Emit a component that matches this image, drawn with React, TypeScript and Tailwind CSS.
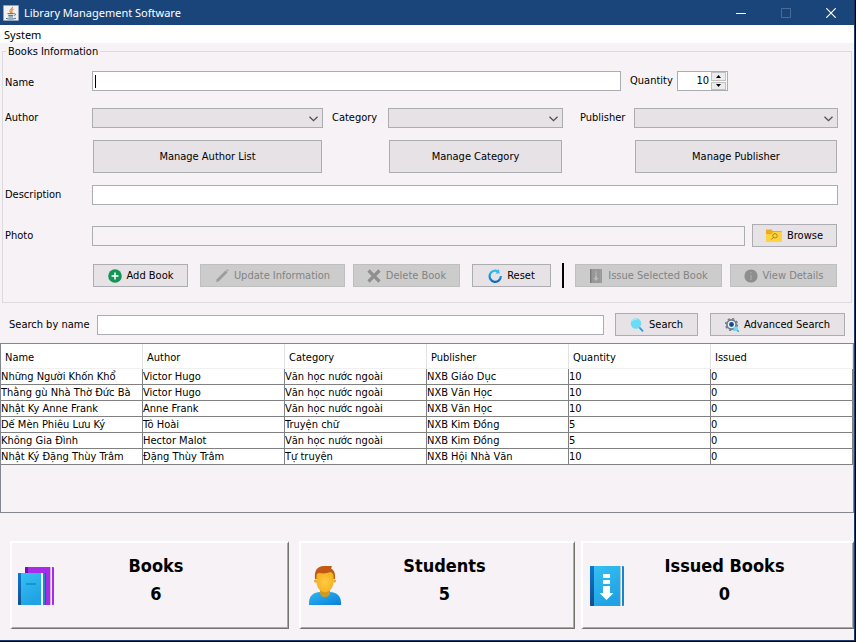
import React from "react";

type IconProps = { className?: string };

const JavaIcon = () => (
  <svg viewBox="0 0 16 16" className="h-4 w-4 shrink-0" aria-hidden="true">
    <rect width="16" height="16" rx="1" fill="#8fa6bd" />
    <rect x="1" y="1" width="14" height="14" fill="#f1f1f1" />
    <path d="M9.5 1.8c.6 1.9-3.2 2.600-2.600 4.300.2.7.9 1 .8 1.900M10.400 4.300c-1.500.7-2.200 1.400-1.500 2.400.4.600.1 1-.4 1.500" fill="none" stroke="#e8802a" strokeWidth="1.100" />
    <path d="M4.500 8.600h6.200M5.200 10.400h5M11 8.800c2.300-.4 1.900 1.600.2 2M5.500 12h4.500M3 13.400c2.500.9 7.500.9 10-.2" fill="none" stroke="#4c708c" strokeWidth="1" />
  </svg>
);

const AddIcon = () => (
  <svg viewBox="0 0 14 14" className="h-3.5 w-3.5 shrink-0" aria-hidden="true">
    <circle cx="7" cy="7" r="6.800" fill="#159455" />
    <path d="M7 3.500v7M3.500 7h7" stroke="#fff" strokeWidth="1.500" />
  </svg>
);

const PencilIcon = () => (
  <svg viewBox="0 0 14 14" className="h-3.5 w-3.5 shrink-0" aria-hidden="true">
    <path d="M1 13l.8-2.800L10.500 1.500l2 2L3.800 12.200z" fill="#9c9c9c" />
    <path d="M11 1l1-.8q.6-.2 1 .3l.4.5q.3.500-.1 1l-.5.800z" fill="#a8a8a8" />
  </svg>
);

const CrossIcon = () => (
  <svg viewBox="0 0 14 14" className="h-3.5 w-3.5 shrink-0" aria-hidden="true">
    <path d="M1.500 1.500l11 11M12.500 1.500l-11 11" stroke="#8f8f8f" strokeWidth="3.200" />
  </svg>
);

const ResetIcon = () => (
  <svg viewBox="0 0 14 14" className="h-3.5 w-3.5 shrink-0" aria-hidden="true">
    <defs>
      <linearGradient id="reset" x1="0" y1="0" x2="0" y2="1">
        <stop offset="0" stopColor="#32bdf0" />
        <stop offset="1" stopColor="#0a68c4" />
      </linearGradient>
    </defs>
    <path d="M10 2.400A5.600 5.600 0 1 0 12.800 7" fill="none" stroke="url(#reset)" strokeWidth="2.200" />
    <path d="M10.800 0l1 4.300-4.300.5z" fill="#35bdef" />
  </svg>
);

const IssueIcon = () => (
  <svg viewBox="0 0 14 14" className="h-3.5 w-3.5 shrink-0" aria-hidden="true">
    <rect x="1" y="0" width="12" height="14" rx="0.500" fill="#989898" />
    <path d="M1 0h1.500v14H1z" fill="#7d7d7d" />
    <path d="M11.600 0v14" stroke="#a5a5a5" strokeWidth="0.600" />
    <path d="M7 2.500v1M7 4.500v1M7 6.500v3" stroke="#bdbdbd" strokeWidth="1.800" />
    <path d="M4.500 9h5L7 12z" fill="#bdbdbd" />
  </svg>
);

const InfoIcon = () => (
  <svg viewBox="0 0 14 14" className="h-3.5 w-3.5 shrink-0" aria-hidden="true">
    <circle cx="7" cy="7" r="6.600" fill="#8e8e8e" />
    <path d="M7 3v1.500M7 6v5" stroke="#a5a5a5" strokeWidth="1.500" />
  </svg>
);

const FolderIcon = () => (
  <svg viewBox="0 0 16 14" className="h-3.5 w-4 shrink-0" aria-hidden="true">
    <path d="M0 1.500q0-1 1-1h4.500l1.200 1.500H15q1 0 1 1V7H0z" fill="#f0ab1c" />
    <path d="M0 5h5.500L7 3h8.200q.8 0 .8.800V12q0 1-1 1H1q-1 0-1-1z" fill="#ffd33f" />
    <circle cx="9" cy="6.800" r="2.200" fill="none" stroke="#a87a12" strokeWidth="0.900" />
    <path d="M7.400 8.400L5.200 10.600" stroke="#a87a12" strokeWidth="1" />
  </svg>
);

const SearchIcon = () => (
  <svg viewBox="0 0 14 14" className="h-3.5 w-3.5 shrink-0" aria-hidden="true">
    <path d="M8.500 8.500l4.500 4.800" stroke="#1f9be4" strokeWidth="1.800" />
    <circle cx="6" cy="5.500" r="5.200" fill="#69dcf8" />
    <path d="M2 3.200a4.500 4.500 0 0 1 5-1.800" stroke="#9cebfd" strokeWidth="1.200" fill="none" />
  </svg>
);

const AdvancedIcon = () => (
  <svg viewBox="0 0 14 14" className="h-3.5 w-3.5 shrink-0" aria-hidden="true">
    <circle cx="6.500" cy="6.500" r="4.600" fill="#f3f3f4" stroke="#6c7b88" strokeWidth="1.700" />
    <circle cx="6.500" cy="6.500" r="5.900" fill="none" stroke="#6c7b88" strokeWidth="1.300" strokeDasharray="2.300 2.330" />
    <circle cx="6.500" cy="6.500" r="2.400" fill="#0f4c94" />
    <path d="M11.500 11.500l2.300 2.300" stroke="#1f9be4" strokeWidth="1.300" />
    <circle cx="10.700" cy="10.700" r="2.300" fill="#63dcf8" />
  </svg>
);

const BooksArt = () => (
  <svg viewBox="0 0 36 38" className="h-[38px] w-9 shrink-0" aria-hidden="true">
    <defs>
      <linearGradient id="blueCover" x1="0" y1="0" x2="0.400" y2="1">
        <stop offset="0" stopColor="#36c0f2" />
        <stop offset="1" stopColor="#20a2e4" />
      </linearGradient>
      <linearGradient id="blueSpine" x1="0" y1="0" x2="0" y2="1">
        <stop offset="0" stopColor="#0b78d2" />
        <stop offset="1" stopColor="#144f8e" />
      </linearGradient>
    </defs>
    <rect x="7" y="0" width="29" height="38" rx="1" fill="#a92bea" />
    <path d="M8 0h2v38H8q-1 0-1-1V1q0-1 1-1z" fill="#6f10b8" />
    <path d="M27 6h1v32h-1z" fill="#8b1bcb" />
    <path d="M32 0h2v38h-2z" fill="#efe4f1" />
    <path d="M32 0h1v38h-1z" fill="#c9b8cd" />
    <rect x="0" y="6" width="27" height="32" rx="1" fill="#1a8cc0" />
    <path d="M3 6h20v32H3z" fill="url(#blueCover)" />
    <path d="M1 6h2v32H1q-1 0-1-1V7q0-1 1-1z" fill="url(#blueSpine)" />
    <path d="M23 6h2v32h-2z" fill="#eef3f6" />
    <path d="M8 16h10v2H8z" fill="#1794d8" />
  </svg>
);

const StudentArt = () => (
  <svg viewBox="0 0 32 39" className="h-[39px] w-8 shrink-0" aria-hidden="true">
    <defs>
      <linearGradient id="shirt" x1="0" y1="0" x2="1" y2="1">
        <stop offset="0" stopColor="#2fb8f0" />
        <stop offset="1" stopColor="#0b7fdc" />
      </linearGradient>
      <radialGradient id="face">
        <stop offset="0" stopColor="#ffca44" />
        <stop offset="1" stopColor="#f5b424" />
      </radialGradient>
    </defs>
    <path d="M0 39v-2.500C0 30 5 26 11 26h10c6 0 11 4 11 10.500V39z" fill="url(#shirt)" />
    <path d="M11 23h10v4.500q-1.500 3.800-5 3.800t-5-3.800z" fill="#d09a22" />
    <path d="M6 13C5 5 8 0 15 0h8l-1 2.500c3.500 1.500 4.500 6 4 10.500z" fill="#c25a14" />
    <circle cx="6.500" cy="15" r="1.500" fill="#eaa520" />
    <circle cx="25.500" cy="15" r="1.500" fill="#eaa520" />
    <path d="M7.500 10c0-2 1-3 3-3 4 1 8 0 11-1 2 1 3 2 3 4v6c0 6-4 10.200-8.500 10.200S7.500 22 7.500 16z" fill="url(#face)" />
  </svg>
);

const IssuedArt = () => (
  <svg viewBox="0 0 34 40" className="h-10 w-[34px] shrink-0" aria-hidden="true">
    <rect x="0" y="0" width="34" height="40" rx="1" fill="#1487cc" />
    <path d="M4 0h26v40H4z" fill="url(#blueCover)" />
    <path d="M1 0h3v40H1q-1 0-1-1V1q0-1 1-1z" fill="url(#blueSpine)" />
    <path d="M30 0h2v40h-2z" fill="#f3f3f3" />
    <path d="M30 0h1v40h-1z" fill="#b9c6cd" />
    <path d="M13 8h7v4h-7zM13 14h7v4h-7zM13 20h7v7h3.500L16.500 34 9.500 27H13z" fill="#fff" />
  </svg>
);

const Chevron = () => (
  <svg viewBox="0 0 9 6" className="pointer-events-none absolute right-[5px] top-2 h-1.5 w-[9px]" aria-hidden="true">
    <path d="M0.500 0.700l4 4 4-4" fill="none" stroke="#505050" strokeWidth="1.300" />
  </svg>
);

const fieldStyle = "h-5 min-w-0 rounded-none border border-[#abadb3] px-1 outline-none";

function Combo({ id }: { id: string }) {
  return (
    <div className="relative min-w-0">
      <select id={id} className="block h-5 w-full appearance-none rounded-none border border-[#abadb3] bg-[#e6e2e6] px-1 outline-none">
        <option value="" />
      </select>
      <Chevron />
    </div>
  );
}

function Btn({
  children,
  icon,
  disabled,
  className = "",
}: IconProps & { children: React.ReactNode; icon?: React.ReactNode; disabled?: boolean }) {
  const tone = disabled
    ? "border-[#bfbfbf] bg-[#cccccc] text-[#838383]"
    : "border-[#abadb3] bg-[#e6e2e6] text-black";
  return (
    <button
      type="button"
      disabled={disabled}
      className={`flex shrink-0 items-center justify-center gap-[5px] whitespace-nowrap border ${tone} ${className}`}
    >
      {icon}
      {children}
    </button>
  );
}

const columns = ["Name", "Author", "Category", "Publisher", "Quantity", "Issued"];

const rows = [
  ["Những Người Khốn Khổ", "Victor Hugo", "Văn học nước ngoài", "NXB Giáo Dục", "10", "0"],
  ["Thằng gù Nhà Thờ Đức Bà", "Victor Hugo", "Văn học nước ngoài", "NXB Văn Học", "10", "0"],
  ["Nhật Ky Anne Frank", "Anne Frank", "Văn học nước ngoài", "NXB Văn Học", "10", "0"],
  ["Dế Mèn Phiêu Lưu Ký", "Tô Hoài", "Truyện chữ", "NXB Kim Đồng", "5", "0"],
  ["Không Gia Đình", "Hector Malot", "Văn học nước ngoài", "NXB Kim Đồng", "5", "0"],
  ["Nhật Ký Đặng Thùy Trâm", "Đặng Thùy Trâm", "Tự truyện", "NXB Hội Nhà Văn", "10", "0"],
];

function Card({
  title,
  value,
  art,
  className = "",
}: IconProps & { title: string; value: string; art: React.ReactNode }) {
  return (
    <section
      className={`grid h-[88px] grid-cols-[46px_1fr_40px] items-center border-b border-l-2 border-r border-t-2 border-b-[#73736f] border-l-white border-r-[#73736f] border-t-white shadow-[inset_-1px_-1px_0_#aaa8aa] ${className}`}
    >
      <div className="flex items-center">{art}</div>
      <div className="pb-3 text-center text-[18px] font-bold leading-7">
        <h2>{title}</h2>
        <p>{value}</p>
      </div>
    </section>
  );
}

export default function App() {
  return (
    <div className="flex min-h-screen flex-col border-b border-r border-black bg-[#f6f2f6] font-['DejaVu_Sans_Condensed','DejaVu_Sans',sans-serif] text-[11px] leading-4 text-black">
      <header className="flex h-[25px] items-center border-r border-[#0f3460] bg-[#19457b] pl-[3px] font-['Noto_Sans',sans-serif] text-white">
        <JavaIcon />
        <h1 className="ml-[5px] flex-1">Library Management Software</h1>
        <button type="button" aria-label="Minimize" className="flex h-full w-[45px] items-center justify-center">
          <svg viewBox="0 0 10 10" className="h-2.5 w-2.5">
            <path d="M0 5.500h10" stroke="#fff" />
          </svg>
        </button>
        <button type="button" aria-label="Maximize" disabled className="flex h-full w-[45px] items-center justify-center">
          <svg viewBox="0 0 10 10" className="h-2.5 w-2.5">
            <path d="M.5.5h9v9h-9z" fill="none" stroke="#4a6d98" />
          </svg>
        </button>
        <button type="button" aria-label="Close" className="flex h-full w-[46px] items-center justify-center">
          <svg viewBox="0 0 10 10" className="h-2.5 w-2.5">
            <path d="M.3.3l9.400 9.400M9.700.3L.3 9.700" stroke="#fff" strokeWidth="1.200" />
          </svg>
        </button>
      </header>

      <div className="flex flex-1 flex-col border-b border-r border-[#17406f]">
        <nav className="flex h-[18px] items-center bg-white pl-1 pt-0.5 font-['Noto_Sans',sans-serif]">
          <button type="button">System</button>
        </nav>

        <main className="flex flex-1 flex-col">
          <fieldset className="mx-0.5 min-w-0 border border-[#dddade] pb-3.5 pl-0.5 pr-[13px]">
            <legend className="ml-px h-4 px-0.5 leading-[18px]">Books Information</legend>

            <div className="mt-3 flex items-center">
              <label htmlFor="name" className="w-[87px] shrink-0 pt-1">Name</label>
              <div className="relative flex min-w-0 flex-1">
                <input id="name" className={`${fieldStyle} w-full bg-white`} />
                <span className="absolute left-[3px] top-1 h-[13px] w-px bg-black" />
              </div>
              <label htmlFor="quantity" className="ml-[9px] w-[47px] shrink-0">Quantity</label>
              <div className="mr-[110px] flex h-5 w-[51px] shrink-0 border border-[#abadb3] bg-white pr-px">
                <input id="quantity" defaultValue="10" inputMode="numeric" className="min-w-0 flex-1 pr-0.5 text-right outline-none" />
                <div className="flex w-[15px] flex-col gap-px">
                  <button type="button" aria-label="Increase" className="flex flex-1 items-center justify-center border border-[#c0c0c0] bg-[#ececec]">
                    <svg viewBox="0 0 5 3" className="h-[3px] w-[5px]"><path d="M0 3L2.500 0 5 3z" /></svg>
                  </button>
                  <button type="button" aria-label="Decrease" className="flex flex-1 items-center justify-center border border-[#c0c0c0] bg-[#ececec]">
                    <svg viewBox="0 0 5 3" className="h-[3px] w-[5px]"><path d="M0 0l2.500 3L5 0z" /></svg>
                  </button>
                </div>
              </div>
            </div>

            <div className="mt-[17px] grid grid-cols-[87px_231fr_65px_175fr_71px_204fr] items-center gap-y-3">
              <label htmlFor="author">Author</label>
              <Combo id="author" />
              <label htmlFor="category" className="pl-[9px]">Category</label>
              <Combo id="category" />
              <label htmlFor="publisher" className="pl-[17px]">Publisher</label>
              <Combo id="publisher" />
              <Btn className="col-start-2 mx-px h-[33px]">Manage Author List</Btn>
              <Btn className="col-start-4 mx-px h-[33px]">Manage Category</Btn>
              <Btn className="col-start-6 mx-px h-[33px]">Manage Publisher</Btn>
            </div>

            <div className="mt-3 flex items-center">
              <label htmlFor="description" className="w-[87px] shrink-0">Description</label>
              <input id="description" className={`${fieldStyle} flex-1 bg-white`} />
            </div>

            <div className="mt-[19px] flex items-center">
              <label htmlFor="photo" className="w-[87px] shrink-0">Photo</label>
              <input id="photo" readOnly className={`${fieldStyle} flex-1 bg-transparent`} />
              <Btn icon={<FolderIcon />} className="ml-[7px] mr-px h-[23px] w-[85px]">Browse</Btn>
            </div>

            <div className="ml-[88px] mr-px mt-4 flex items-center justify-between">
              <Btn icon={<AddIcon />} className="h-[23px] w-[95px]">Add Book</Btn>
              <Btn icon={<PencilIcon />} disabled className="ml-1 h-[23px] w-[145px]">Update Information</Btn>
              <Btn icon={<CrossIcon />} disabled className="h-[23px] w-[107px]">Delete Book</Btn>
              <Btn icon={<ResetIcon />} className="ml-1 h-[23px] w-[79px]">Reset</Btn>
              <div className="mx-[3px] h-[25px] w-0.5 bg-black" />
              <Btn icon={<IssueIcon />} disabled className="h-[23px] w-[147px]">Issue Selected Book</Btn>
              <Btn icon={<InfoIcon />} disabled className="h-[23px] w-[107px]">View Details</Btn>
            </div>
          </fieldset>

          <form className="mt-2.5 flex items-center px-[9px]" onSubmit={(e) => e.preventDefault()}>
            <label htmlFor="search" className="w-[88px] shrink-0">Search by name</label>
            <input id="search" className={`${fieldStyle} flex-1 bg-white`} />
            <Btn icon={<SearchIcon />} className="ml-[11px] h-[23px] w-[83px]">Search</Btn>
            <Btn icon={<AdvancedIcon />} className="ml-3 h-[23px] w-[135px]">Advanced Search</Btn>
          </form>

          <div className="mt-[7px] h-[170px] border border-[#828790]">
            <table className="w-full table-fixed border-separate border-spacing-0 text-left">
              <thead>
                <tr>
                  {columns.map((c) => (
                    <th key={c} className="h-[25px] border-b border-r border-b-[#f0f0f0] border-r-[#e2e2e2] bg-white p-0 pl-1 pt-1 font-normal">{c}</th>
                  ))}
                </tr>
              </thead>
              <tbody>
                {rows.map((r) => (
                  <tr key={r[0]}>
                    {r.map((cell, i) => (
                      <td key={i} className="h-4 overflow-hidden whitespace-nowrap border-b border-r border-[#808080] bg-white p-0 leading-[15px]">{cell}</td>
                    ))}
                  </tr>
                ))}
              </tbody>
            </table>
          </div>

          <div className="mb-[11px] mt-7 grid grid-cols-[289fr_282fr_273fr] pl-2.5">
            <Card title="Books" value="6" art={<BooksArt />} className="mr-2.5 pl-1.5" />
            <Card title="Students" value="5" art={<StudentArt />} className="mr-1.5 pl-2" />
            <Card title="Issued Books" value="0" art={<IssuedArt />} className="pl-[7px]" />
          </div>
        </main>
      </div>
    </div>
  );
}
